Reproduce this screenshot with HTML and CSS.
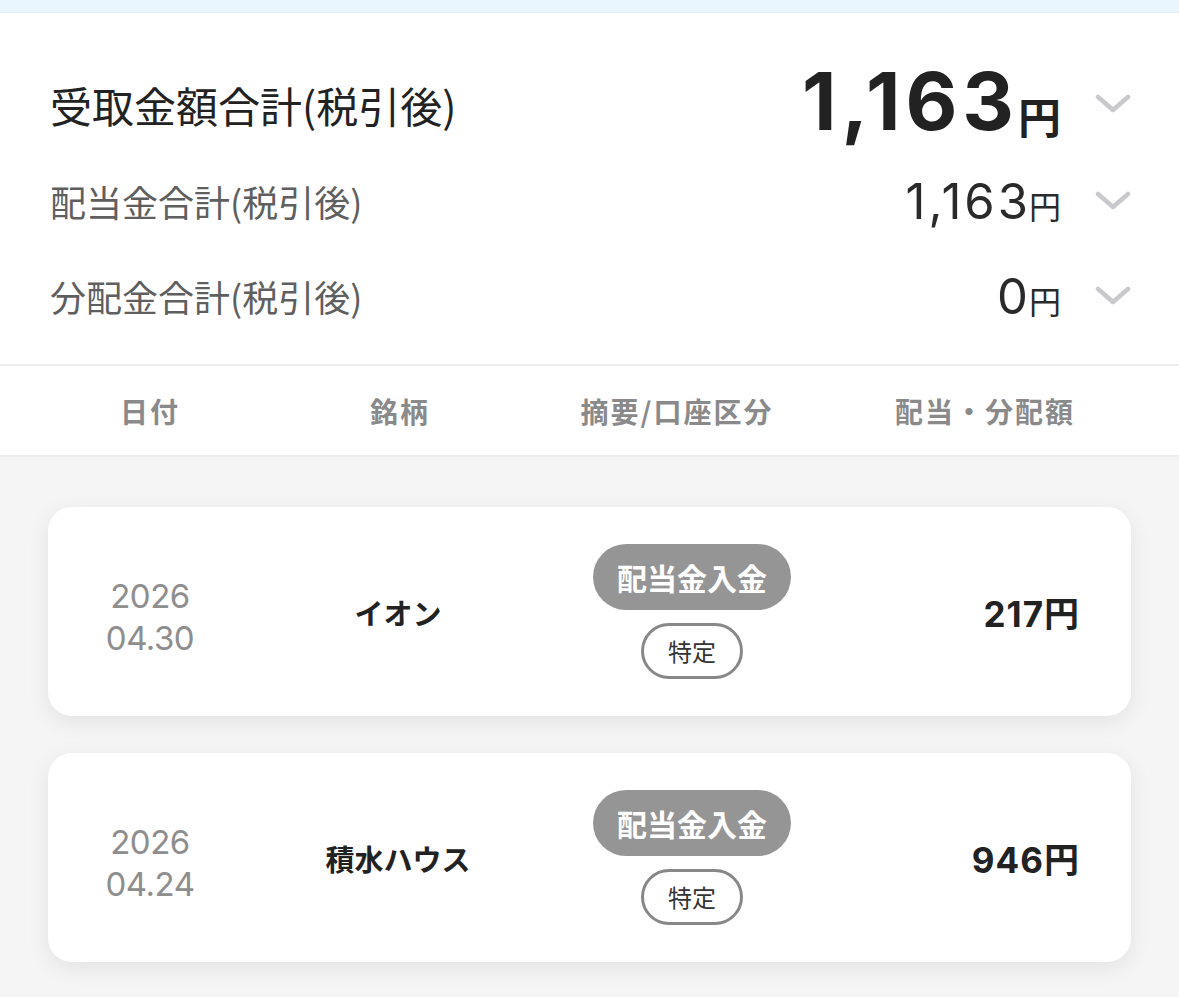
FILE: index.html
```html
<!DOCTYPE html>
<html lang="ja">
<head>
  <meta charset="UTF-8">
  <meta name="viewport" content="width=device-width, initial-scale=1.0">
  <title>配当金・分配金</title>
  <link rel="stylesheet" href="styles.css">
</head>
<body>
  <div class="top-strip"></div>

  <section class="summary">
    <div class="summary-row total">
      <span class="label">受取金額合計(税引後)</span>
      <span class="value"><span class="num">1,163</span><span class="yen">円</span></span>
      <svg class="chevron" viewBox="0 0 36 20"><polyline points="3,3 18,16 33,3"/></svg>
    </div>
    <div class="summary-row sub">
      <span class="label">配当金合計(税引後)</span>
      <span class="value"><span class="num">1,163</span><span class="yen">円</span></span>
      <svg class="chevron" viewBox="0 0 36 20"><polyline points="3,3 18,16 33,3"/></svg>
    </div>
    <div class="summary-row sub last">
      <span class="label">分配金合計(税引後)</span>
      <span class="value"><span class="num">0</span><span class="yen">円</span></span>
      <svg class="chevron" viewBox="0 0 36 20"><polyline points="3,3 18,16 33,3"/></svg>
    </div>
  </section>

  <div class="list-header">
    <span>日付</span>
    <span>銘柄</span>
    <span>摘要/口座区分</span>
    <span>配当・分配額</span>
  </div>

  <div class="list">
    <div class="card">
      <div class="date">2026<br>04.30</div>
      <div class="name">イオン</div>
      <div class="tags">
        <span class="tag-fill">配当金入金</span>
        <span class="tag-line">特定</span>
      </div>
      <div class="amount">217円</div>
    </div>

    <div class="card">
      <div class="date">2026<br>04.24</div>
      <div class="name">積水ハウス</div>
      <div class="tags">
        <span class="tag-fill">配当金入金</span>
        <span class="tag-line">特定</span>
      </div>
      <div class="amount">946円</div>
    </div>
  </div>
</body>
</html>
```

FILE: styles.css
```css
body {
  margin: 0;
  font-family: Inter, "Noto Sans CJK JP", sans-serif;
  background-color: #f5f5f5;
  color: #222;
}

.top-strip {
  height: 12px;
  background-color: #eaf6fd;
  border-bottom: 1px solid #e2eff7;
}

.summary {
  background: #fff;
  padding: 41px 48px 20px 50px;
}

.summary-row {
  display: flex;
  align-items: center;
}

.summary-row.total {
  height: 100px;
}

.summary-row.sub {
  height: 94px;
}

.summary-row.last {
  height: 96px;
}

.label {
  flex: 1;
  font-family: "Noto Sans CJK JP", sans-serif;
}

.total .label {
  font-size: 42px;
  color: #222;
}

.sub .label {
  font-size: 36px;
  color: #5f5f5f;
}

.value {
  display: flex;
  align-items: baseline;
  margin-right: 34px;
}

.total .num {
  font-size: 80px;
  font-weight: 700;
  letter-spacing: 5px;
  position: relative;
  top: -4px;
}

.total .yen {
  font-family: "Noto Sans CJK JP", sans-serif;
  font-size: 43px;
  font-weight: 700;
  margin-left: -1px;
}

.sub .num {
  font-size: 49px;
  font-weight: 400;
  color: #2a2a2a;
  letter-spacing: 3px;
}

.sub .yen {
  font-family: "Noto Sans CJK JP", sans-serif;
  font-size: 32px;
  color: #2a2a2a;
  margin-left: -2px;
}

.chevron {
  width: 36px;
  height: 20px;
  margin-bottom: 1px;
  fill: none;
  stroke: #c8c8cd;
  stroke-width: 4.5;
  stroke-linecap: round;
  stroke-linejoin: round;
}

.list-header {
  display: grid;
  grid-template-columns: 204px 296px 258px 358px;
  align-items: center;
  height: 89px;
  padding-left: 48px;
  background: #fff;
  border-top: 2px solid #ececec;
  border-bottom: 2px solid #ececec;
  font-family: "Noto Sans CJK JP", sans-serif;
  font-size: 28px;
  font-weight: 700;
  letter-spacing: 2px;
  color: #8a8a8a;
  text-align: center;
}

.list {
  padding: 50px 48px 30px 48px;
  display: flex;
  flex-direction: column;
  gap: 37px;
}

.card {
  display: grid;
  grid-template-columns: 204px 292px 296px 1fr;
  align-items: center;
  height: 209px;
  padding-right: 51px;
  background: #fff;
  border-radius: 24px;
  box-shadow: 0 6px 22px rgba(0, 0, 0, 0.08);
}

.date {
  margin-top: 10px;
  text-align: center;
  font-size: 33px;
  line-height: 42px;
  color: #8e8e8e;
  letter-spacing: -0.5px;
}

.name {
  text-align: center;
  font-family: "Noto Sans CJK JP", sans-serif;
  font-size: 29px;
  font-weight: 700;
  color: #222;
}

.tags {
  display: flex;
  flex-direction: column;
  align-items: center;
  gap: 13px;
}

.tag-fill {
  background: #959595;
  color: #fff;
  font-family: "Noto Sans CJK JP", sans-serif;
  font-size: 30px;
  font-weight: 700;
  line-height: 36px;
  padding: 15px 24px;
  border-radius: 33px;
}

.tag-line {
  border: 3px solid #888;
  color: #333;
  font-family: "Noto Sans CJK JP", sans-serif;
  font-size: 24px;
  line-height: 30px;
  padding: 10px 24px;
  border-radius: 28px;
}

.amount {
  text-align: right;
  font-size: 35px;
  font-weight: 700;
  letter-spacing: 1px;
  color: #222;
}
```
